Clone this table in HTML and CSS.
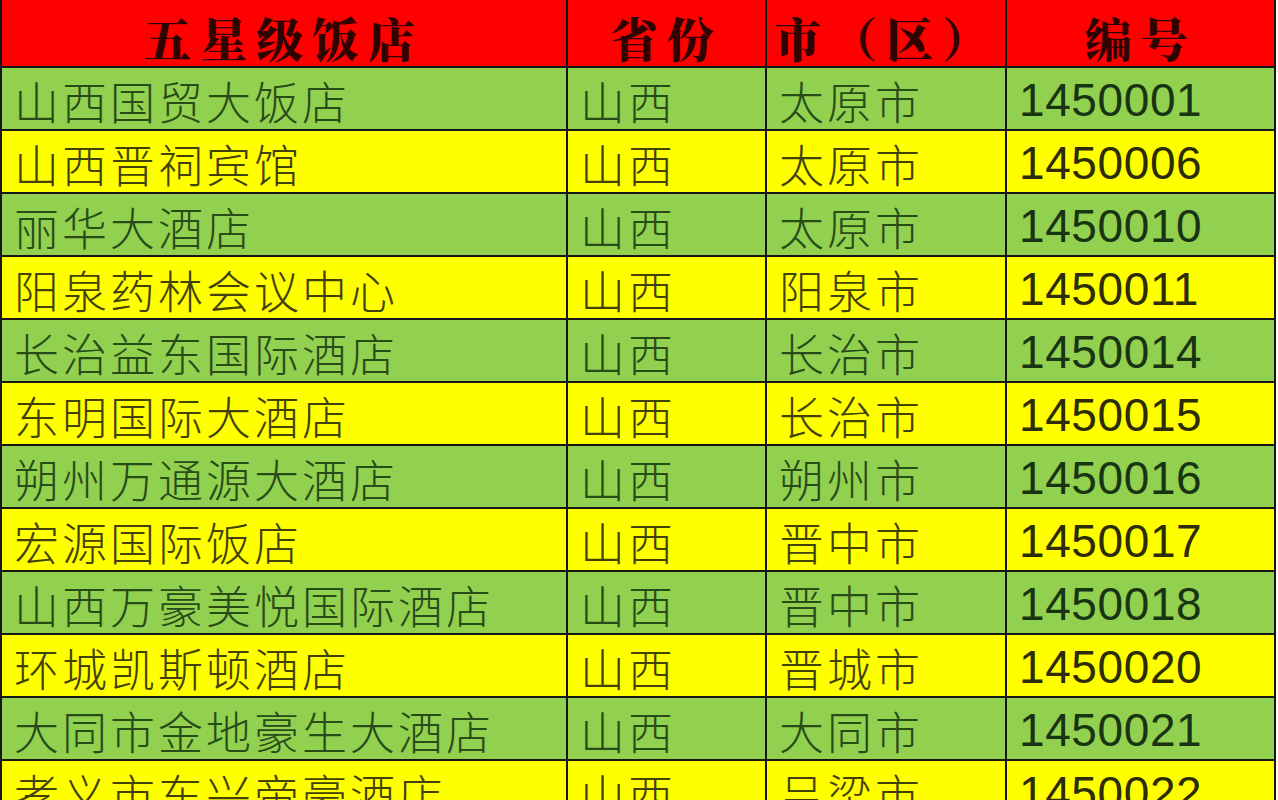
FILE: index.html
```html
<!DOCTYPE html>
<html lang="zh-CN">
<head>
<meta charset="utf-8">
<title>山西五星级饭店</title>
<link rel="stylesheet" href="styles.css">
</head>
<body>
<div class="sheet">
  <div class="row head">
    <div class="cell">五星级饭店</div>
    <div class="cell">省份</div>
    <div class="cell">市（区）</div>
    <div class="cell">编号</div>
  </div>
  <div class="row green"><div class="cell">山西国贸大饭店</div><div class="cell">山西</div><div class="cell">太原市</div><div class="cell num">1450001</div></div>
  <div class="row yellow"><div class="cell">山西晋祠宾馆</div><div class="cell">山西</div><div class="cell">太原市</div><div class="cell num">1450006</div></div>
  <div class="row green"><div class="cell">丽华大酒店</div><div class="cell">山西</div><div class="cell">太原市</div><div class="cell num">1450010</div></div>
  <div class="row yellow"><div class="cell">阳泉药林会议中心</div><div class="cell">山西</div><div class="cell">阳泉市</div><div class="cell num">1450011</div></div>
  <div class="row green"><div class="cell">长治益东国际酒店</div><div class="cell">山西</div><div class="cell">长治市</div><div class="cell num">1450014</div></div>
  <div class="row yellow"><div class="cell">东明国际大酒店</div><div class="cell">山西</div><div class="cell">长治市</div><div class="cell num">1450015</div></div>
  <div class="row green"><div class="cell">朔州万通源大酒店</div><div class="cell">山西</div><div class="cell">朔州市</div><div class="cell num">1450016</div></div>
  <div class="row yellow"><div class="cell">宏源国际饭店</div><div class="cell">山西</div><div class="cell">晋中市</div><div class="cell num">1450017</div></div>
  <div class="row green"><div class="cell">山西万豪美悦国际酒店</div><div class="cell">山西</div><div class="cell">晋中市</div><div class="cell num">1450018</div></div>
  <div class="row yellow"><div class="cell">环城凯斯顿酒店</div><div class="cell">山西</div><div class="cell">晋城市</div><div class="cell num">1450020</div></div>
  <div class="row green"><div class="cell">大同市金地豪生大酒店</div><div class="cell">山西</div><div class="cell">大同市</div><div class="cell num">1450021</div></div>
  <div class="row yellow"><div class="cell">孝义市东兴帝豪酒店</div><div class="cell">山西</div><div class="cell">吕梁市</div><div class="cell num">1450022</div></div>
</div>
</body>
</html>
```
FILE: styles.css
```css
html, body {
  margin: 0;
  padding: 0;
  background: #ffffff;
}

.sheet {
  display: grid;
  grid-template-columns: 564px 197px 238px 267px;
  grid-template-rows: 66px;
  grid-auto-rows: 61px;
  gap: 2px;
  padding: 0 2px 2px 2px;
  width: max-content;
  background: #161616;
}

.row {
  display: contents;
}

.cell {
  display: flex;
  align-items: center;
  padding-left: 12px;
  white-space: nowrap;
  font-family: "Noto Sans CJK SC", "Noto Sans", sans-serif;
  font-weight: 300;
  font-size: 45px;
  line-height: 1.1;
  letter-spacing: 3px;
  padding-top: 4px;
  box-sizing: border-box;
  min-width: 0;
}

.head .cell {
  background: #ff0000;
  color: #300303;
  justify-content: center;
  padding-left: 0;
  padding-top: 8px;
  font-family: "Noto Serif CJK SC", "Noto Sans CJK SC", serif;
  font-weight: 900;
  font-size: 47px;
  letter-spacing: 9px;
}

.green .cell {
  background: #92d050;
  color: #284c18;
}

.yellow .cell {
  background: #ffff00;
  color: #424208;
}

.cell.num {
  font-family: "Liberation Sans", Arial, sans-serif;
  font-weight: 400;
  font-size: 46px;
  letter-spacing: 0.6px;
  padding-top: 4px;
}

.green .cell.num {
  color: #183412;
}

.yellow .cell.num {
  color: #2c2c06;
}
```
